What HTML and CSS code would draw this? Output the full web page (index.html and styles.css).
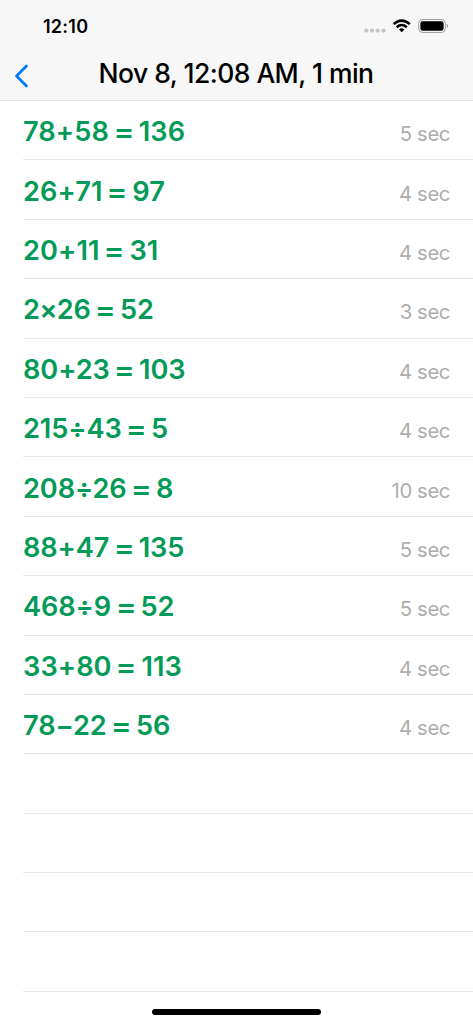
FILE: index.html
```html
<!DOCTYPE html>
<html lang="en">
<head>
<meta charset="utf-8">
<title>Session results</title>
<link rel="stylesheet" href="styles.css">
</head>
<body>
<div class="screen">
  <header class="header">
    <div class="status">
      <span class="clock">12:10</span>
      <svg class="status-icons" width="86" height="20" viewBox="0 0 86 20">
        <g fill="#c4c4c5"><circle cx="3.2" cy="14.6" r="2.1"/><circle cx="9" cy="14.6" r="2.1"/><circle cx="14.7" cy="14.6" r="2.1"/><circle cx="20.4" cy="14.6" r="2.1"/></g>
        <g fill="none" stroke="#000" stroke-width="2.5"><path d="M30.6 8.1 Q38.7 1.2 46.8 8.1"/><path d="M33.6 11.2 Q38.7 6.9 43.8 11.2"/></g>
        <path d="M36 13.4 Q38.7 11.3 41.4 13.4 L38.7 16.2Z"/>
        <rect x="55.7" y="3.5" width="26.6" height="13" rx="4" fill="none" stroke="#a0a0a0"/>
        <rect x="57.4" y="5.2" width="23.2" height="9.6" rx="2.4"/>
        <path d="M83.8 7.8 Q85.2 8.4 85.2 10 T83.8 12.2Z" fill="#a0a0a0"/>
      </svg>
    </div>
    <div class="nav">
      <svg class="back" width="16" height="24" viewBox="0 0 16 24"><path d="M12.5 2 L2.5 12 L12.5 22" fill="none" stroke="#007aff" stroke-width="2.7" stroke-linecap="round" stroke-linejoin="round"/></svg>
      <h1 class="title">Nov 8, 12:08 AM, 1 min</h1>
    </div>
  </header>
  <ul class="list">
    <li class="row"><span class="problem loose">78+58 <span class="eq">=</span> 136</span><span class="time">5 sec</span></li>
    <li class="row"><span class="problem loose">26+71 <span class="eq">=</span> 97</span><span class="time">4 sec</span></li>
    <li class="row"><span class="problem loose">20+11 <span class="eq">=</span> 31</span><span class="time">4 sec</span></li>
    <li class="row"><span class="problem">2<span class="times">×</span>26 <span class="eq">=</span> 52</span><span class="time">3 sec</span></li>
    <li class="row"><span class="problem">80+23 <span class="eq">=</span> 103</span><span class="time">4 sec</span></li>
    <li class="row"><span class="problem">215÷43 <span class="eq">=</span> 5</span><span class="time">4 sec</span></li>
    <li class="row"><span class="problem">208÷26 <span class="eq">=</span> 8</span><span class="time">10 sec</span></li>
    <li class="row"><span class="problem">88+47 <span class="eq">=</span> 135</span><span class="time">5 sec</span></li>
    <li class="row"><span class="problem">468÷9 <span class="eq">=</span> 52</span><span class="time">5 sec</span></li>
    <li class="row"><span class="problem loose">33+80 <span class="eq">=</span> 113</span><span class="time">4 sec</span></li>
    <li class="row"><span class="problem">78−22 <span class="eq">=</span> 56</span><span class="time">4 sec</span></li>
    <li class="row"></li>
    <li class="row"></li>
    <li class="row"></li>
    <li class="row"></li>
  </ul>
  <div class="home-indicator"></div>
</div>
</body>
</html>
```
FILE: styles.css
```css
* { box-sizing: border-box; }
body { margin: 0; background: #fff; font-family: Inter, "Liberation Sans", sans-serif; }
.screen { position: relative; width: 473px; height: 1024px; overflow: hidden; }
.header { height: 101px; background: #f7f7f7; border-bottom: 1px solid #e2e2e2; }
.status { height: 52px; display: flex; justify-content: space-between; align-items: flex-start; padding: 16px 24px 0 43px; }
.clock { font-size: 18px; line-height: 21px; font-weight: 600; letter-spacing: 0.25px; }
.nav { height: 48px; display: flex; align-items: flex-start; padding: 0 14px; }
.back { margin-top: 12px; flex: none; }
.title { flex: 1; margin: 5px 17px 0 0; text-align: center; font-size: 26.5px; line-height: 32px; font-weight: 500; letter-spacing: -0.55px; white-space: nowrap; }
.list { list-style: none; margin: 0 0 0 23px; padding: 0; }
.row { height: 59.4px; border-bottom: 1px solid #e8e8e8; display: flex; align-items: baseline; justify-content: space-between; padding: 14.2px 23px 0 0; }
.problem { color: #049a58; font-size: 27.2px; line-height: 33px; font-weight: 600; letter-spacing: -0.1px; word-spacing: -1.2px; white-space: nowrap; }
.loose { letter-spacing: 0.08px; }
.eq { display: inline-block; transform: scaleX(1.15); }
.times { margin: 0 -0.7px; }
.time { color: #adadad; font-size: 20.3px; line-height: 24px; letter-spacing: -0.4px; white-space: nowrap; }
.home-indicator { position: absolute; left: 152px; bottom: 9px; width: 169px; height: 6px; border-radius: 3px; background: #000; }
```
